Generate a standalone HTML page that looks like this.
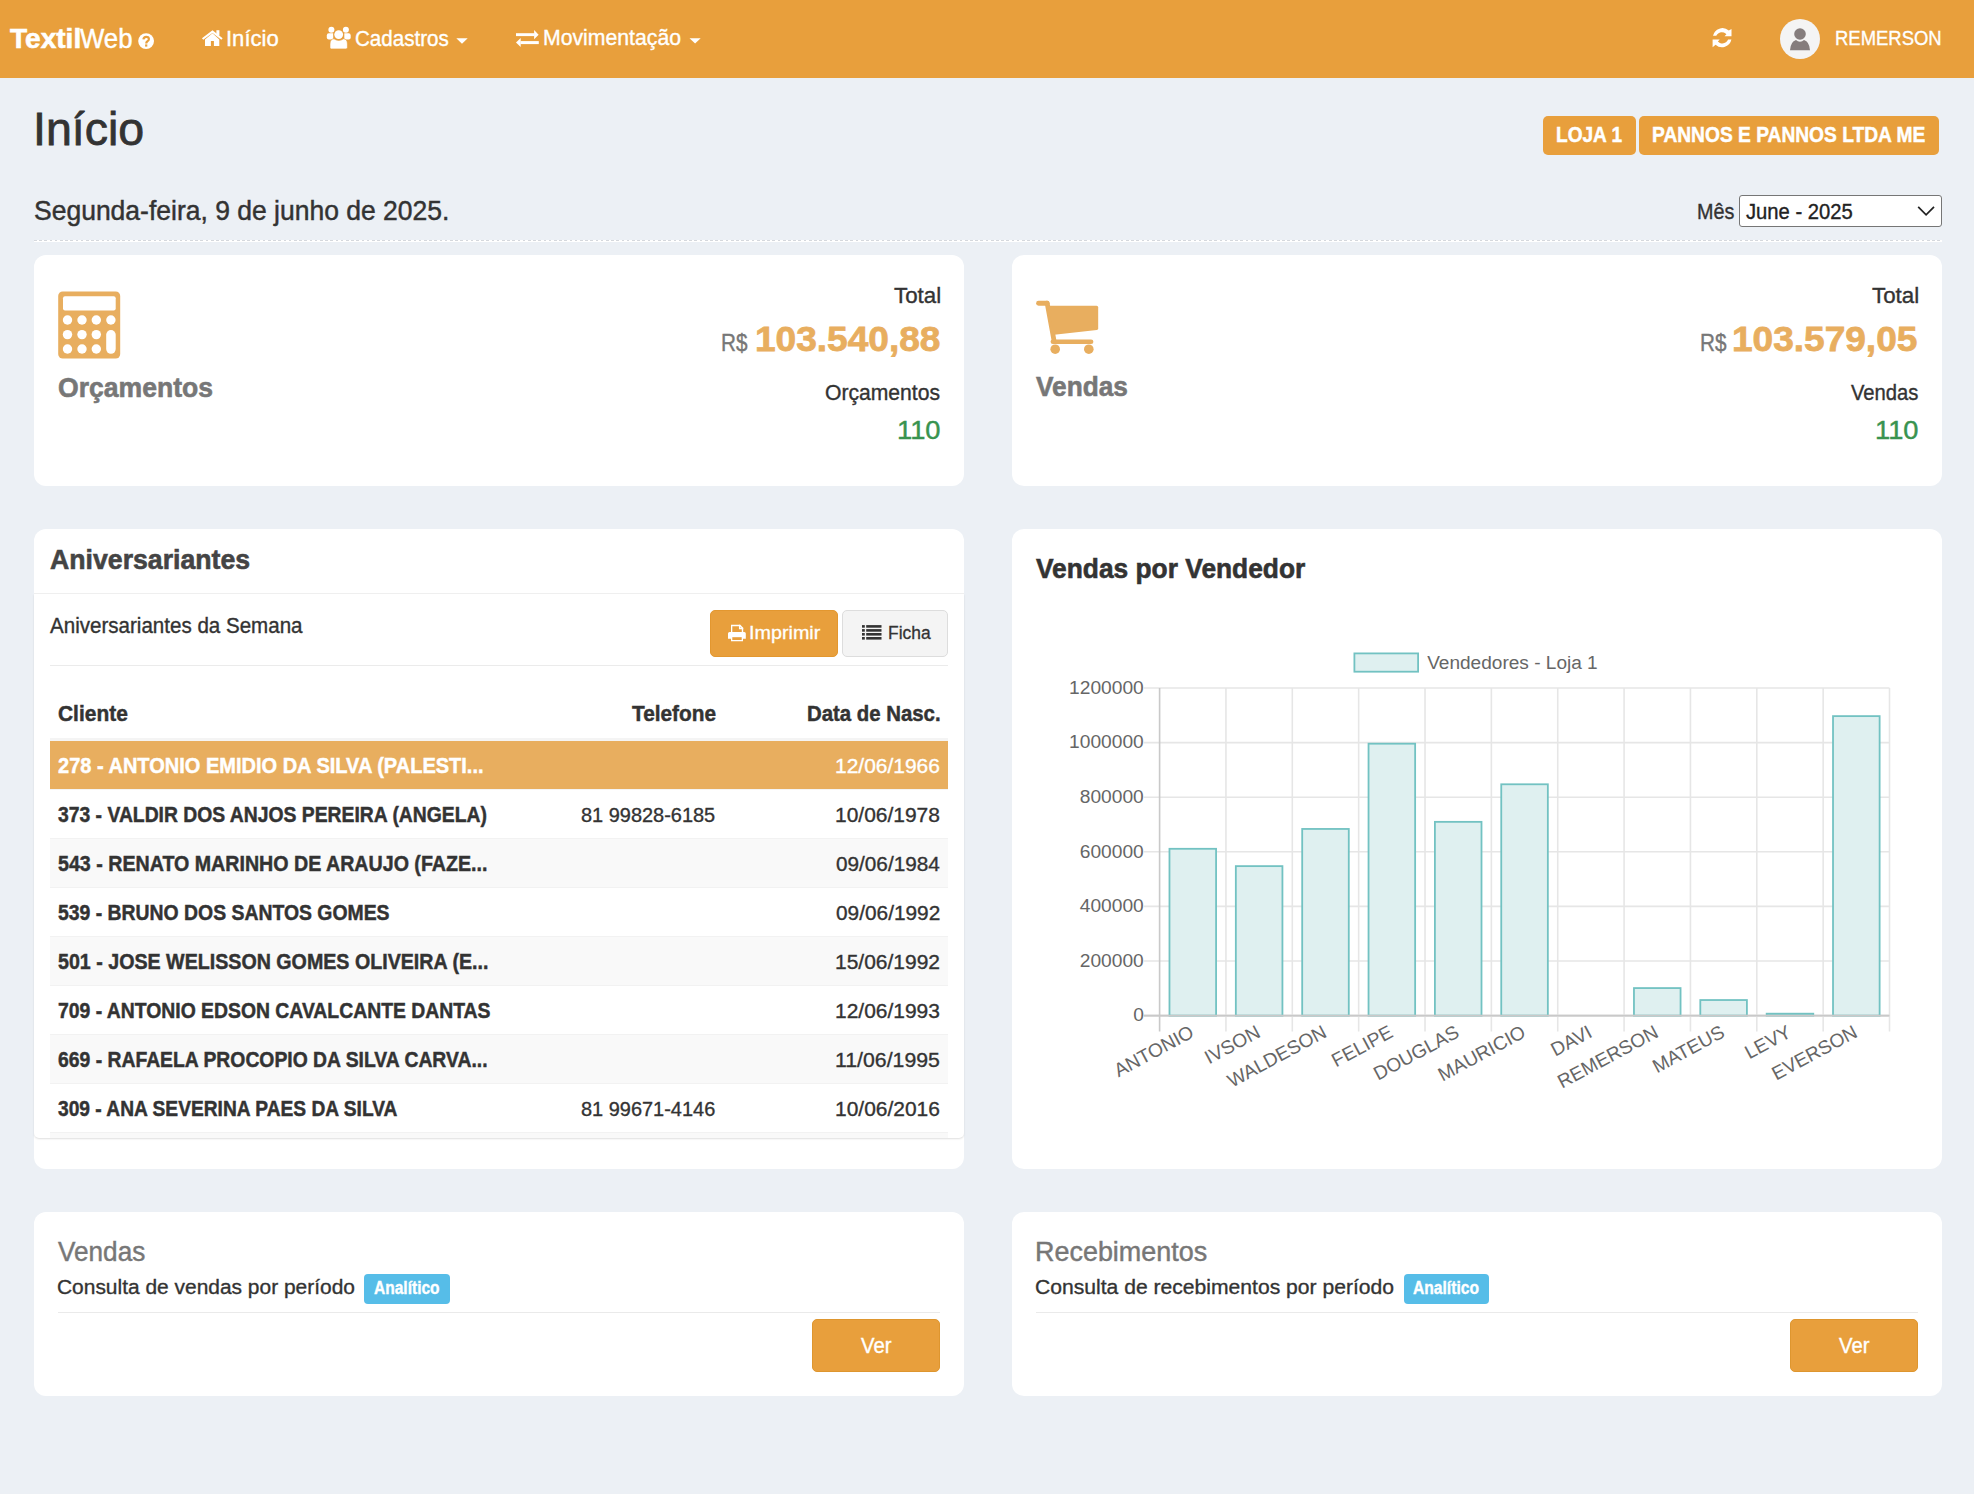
<!DOCTYPE html>
<html><head><meta charset="utf-8">
<style>
html,body{margin:0;padding:0;}
body{width:1974px;height:1494px;overflow:hidden;background:#ECF0F5;position:relative;font-family:"Liberation Sans",sans-serif;}
.a{position:absolute;}
.t{position:absolute;white-space:pre;transform-origin:0 0;font-family:"Liberation Sans",sans-serif;}
.card{position:absolute;background:#fff;border-radius:12px;}
svg{position:absolute;overflow:visible;}
</style></head><body>
<!-- NAVBAR -->
<div class="a" style="left:0;top:0;width:1974px;height:78px;background:#E89F3C;"></div>
<svg style="left:0;top:0" width="1974" height="78" viewBox="0 0 1974 78">
  <!-- question circle -->
  <circle cx="146.1" cy="41.1" r="7.9" fill="#fff"/>
  <path d="M143.4 39.4 q0.3 -2.6 2.8 -2.6 q2.7 0 2.7 2.3 q0 1.4 -1.4 2.1 q-1.2 0.7 -1.2 1.9 v0.3" fill="none" stroke="#E89F3C" stroke-width="2.2" stroke-linecap="butt"/>
  <rect x="145.1" y="44.4" width="2.2" height="2.2" fill="#E89F3C"/>
  <!-- home -->
  <path d="M202.6 39.0 L212.5 31.6 L222.0 39.0" fill="none" stroke="#fff" stroke-width="2.1" stroke-linecap="butt" stroke-linejoin="miter"/>
  <rect x="216.4" y="30.2" width="3.0" height="5.3" fill="#fff"/>
  <path d="M205 39.6 L212.5 33.3 L219.3 39.6 V45.9 H213.9 V40.9 H210.9 V45.9 H205 Z" fill="#fff"/>
  <!-- users -->
  <circle cx="331.4" cy="29.8" r="3.0" fill="#fff"/>
  <circle cx="345.9" cy="29.8" r="3.0" fill="#fff"/>
  <path d="M326.8 35.5 q0 -2.3 2 -2.3 h4.4 v6.3 h-4.4 q-2 0 -2 -2 z" fill="#fff"/>
  <path d="M350.7 35.5 q0 -2.3 -2 -2.3 h-4.4 v6.3 h4.4 q2 0 2 -2 z" fill="#fff"/>
  <circle cx="338.7" cy="34.6" r="5.0" fill="#E89F3C"/>
  <circle cx="338.7" cy="34.6" r="4.4" fill="#fff"/>
  <path d="M330 44 q0 -5 4 -5.2 q2 1.6 4.7 1.6 q2.7 0 4.7 -1.6 q4 0.2 4 5.2 v3.5 q0 1.4 -1.4 1.4 h-14.6 q-1.4 0 -1.4 -1.4 z" fill="#fff" stroke="#E89F3C" stroke-width="0.6"/>
  <!-- caret -->
  <path d="M456.3 38.2 h11.4 l-5.7 5.6 z" fill="#fff"/>
  <!-- exchange -->
  <rect x="516" y="33.2" width="18.5" height="2.9" fill="#fff"/>
  <path d="M534.1 30 L538.6 34.65 L534.1 39.2 Z" fill="#fff"/>
  <rect x="520.5" y="41.1" width="18.3" height="3" fill="#fff"/>
  <path d="M520.7 38.1 L516 42.6 L520.7 47.1 Z" fill="#fff"/>
  <path d="M689.5 38.2 h11.2 l-5.6 5.4 z" fill="#fff"/>
  <!-- refresh -->
  <path d="M1713 35.8 A9.6 9.6 0 0 1 1728.8 30.6 L1731.5 29 V36.2 H1724.5 L1726.4 34.2 A6.2 6.2 0 0 0 1716.3 35.8 Z" fill="#fff"/>
  <path d="M1731.4 39.6 A9.6 9.6 0 0 1 1715.6 44.8 L1712.6 47.2 V39.6 H1719.7 L1717.9 41.6 A6.2 6.2 0 0 0 1728.1 39.6 Z" fill="#fff"/>
  <!-- avatar -->
  <circle cx="1800" cy="39" r="20" fill="#F4F4F4"/>
  <circle cx="1800" cy="34" r="5.8" fill="#857D7D"/>
  <path d="M1790 50.3 q0.6 -8.6 6 -10.2 q1.8 1.6 4 1.6 q2.2 0 4 -1.6 q5.4 1.6 6 10.2 z" fill="#857D7D"/>
</svg>
<!-- HEADER badges -->
<div class="a" style="left:1543px;top:116px;width:93px;height:39px;background:#E89F3C;border-radius:5px;"></div>
<div class="a" style="left:1639px;top:116px;width:300px;height:39px;background:#E89F3C;border-radius:5px;"></div>
<!-- select -->
<div class="a" style="left:1739px;top:195px;width:201px;height:30px;background:#fff;border:1px solid #767676;border-radius:3px;"></div>
<svg style="left:0;top:0" width="1974" height="260" viewBox="0 0 1974 260">
  <path d="M1918.2 206.8 L1926.1 214.8 L1934 206.8" fill="none" stroke="#222" stroke-width="1.7"/>
</svg>
<!-- dashed line -->
<div class="a" style="left:34px;top:240px;width:1908px;height:1px;background:repeating-linear-gradient(90deg,#D5D8DD 0 2.7px,#fff 2.7px 5.2px);"></div><div class="a" style="left:34px;top:241px;width:1908px;height:1px;background:#fff;"></div>

<!-- ROW 1 cards -->
<div class="card" style="left:34px;top:255px;width:930px;height:231px;"></div>
<div class="card" style="left:1012px;top:255px;width:930px;height:231px;"></div>
<svg style="left:0;top:0" width="1974" height="500" viewBox="0 0 1974 500">
  <!-- calculator -->
  <rect x="58.2" y="291.5" width="62" height="67" rx="4.5" fill="#E8AE5F"/>
  <rect x="63" y="296.2" width="52.7" height="14.3" rx="2" fill="#fff"/>
  <g fill="#fff">
    <circle cx="67.5" cy="320" r="4.7"/><circle cx="82" cy="320" r="4.7"/><circle cx="96.3" cy="320" r="4.7"/><circle cx="110.9" cy="320" r="4.7"/>
    <circle cx="67.5" cy="334.6" r="4.7"/><circle cx="82" cy="334.6" r="4.7"/><circle cx="96.3" cy="334.6" r="4.7"/>
    <circle cx="67.5" cy="349" r="4.7"/><circle cx="82" cy="349" r="4.7"/><circle cx="96.3" cy="349" r="4.7"/>
    <rect x="106.2" y="330" width="9.5" height="23.8" rx="4.75"/>
  </g>
  <!-- cart -->
  <g fill="#E8AE5F">
    <rect x="1036.1" y="300.8" width="13.5" height="4.9" rx="2.45"/>
    <path d="M1047.2 303.2 L1054.2 341.6" fill="none" stroke="#E8AE5F" stroke-width="4.8" stroke-linecap="round"/>
    <path d="M1047.8 305.8 L1096.6 305.8 Q1098.2 305.8 1098.2 307.4 V328.6 Q1098.2 329.8 1096.8 330 L1054.2 334.8 Z"/>
    <rect x="1050.6" y="339.4" width="42.8" height="4.6" rx="2.3"/>
    <circle cx="1055.2" cy="349.2" r="4.8"/>
    <circle cx="1088.8" cy="349.2" r="4.8"/>
  </g>
</svg>

<!-- ROW 2 cards -->
<div class="card" style="left:34px;top:529px;width:930px;height:640px;"></div>
<div class="card" style="left:1012px;top:529px;width:930px;height:640px;"></div>
<!-- aniversariantes inner -->
<div class="a" style="left:34px;top:593px;width:930px;height:1px;background:#F0F0F0;"></div>
<div class="a" style="left:34px;top:594px;width:930px;height:544px;background:#fff;border-radius:0 0 5px 5px;box-shadow:0 1px 2px rgba(0,0,0,0.13);overflow:hidden;">
  <div class="a" style="left:16px;top:71px;width:898px;height:1px;background:#EBEBEB;"></div>
  <div class="a" style="left:16px;top:144px;width:898px;height:3px;background:#F4F4F4;"></div>
  <div class="a" style="left:16px;top:147px;width:898px;height:48px;background:#E8AE5F;"></div>
  <div class="a" style="left:16px;top:195px;width:898px;height:1px;background:#F4F4F4;"></div>
  <div class="a" style="left:16px;top:244px;width:898px;height:49px;background:#F9F9F9;border-top:1px solid #F2F2F2;box-sizing:border-box;"></div>
  <div class="a" style="left:16px;top:293px;width:898px;height:1px;background:#F2F2F2;"></div>
  <div class="a" style="left:16px;top:342px;width:898px;height:49px;background:#F9F9F9;border-top:1px solid #F2F2F2;box-sizing:border-box;"></div>
  <div class="a" style="left:16px;top:391px;width:898px;height:1px;background:#F2F2F2;"></div>
  <div class="a" style="left:16px;top:440px;width:898px;height:49px;background:#F9F9F9;border-top:1px solid #F2F2F2;box-sizing:border-box;"></div>
  <div class="a" style="left:16px;top:489px;width:898px;height:1px;background:#F2F2F2;"></div>
  <div class="a" style="left:16px;top:538px;width:898px;height:49px;background:#F9F9F9;border-top:1px solid #F2F2F2;box-sizing:border-box;"></div>
</div>
<!-- buttons -->
<div class="a" style="left:710px;top:610px;width:126px;height:45px;background:#E89F3C;border:1px solid #E3972F;border-radius:5px;"></div>
<div class="a" style="left:842px;top:610px;width:104px;height:45px;background:#F4F4F4;border:1px solid #DDDDDD;border-radius:5px;"></div>
<svg style="left:0;top:0" width="1974" height="700" viewBox="0 0 1974 700">
  <!-- print icon -->
  <g fill="#fff">
    <path d="M731 624.8 H740.3 L743.2 627.7 V633 H741.8 V628.5 L739.6 626.2 H732.3 V633 H731 Z"/>
    <path d="M739.6 624.8 V628.5 H743.2" fill="none" stroke="#fff" stroke-width="1.3"/>
    <path d="M729.6 632.1 H744.3 Q745.8 632.1 745.8 633.6 V638.7 H743 V641.3 H731 V638.7 H728 V633.6 Q728 632.1 729.6 632.1 Z"/>
  </g>
  <rect x="732.3" y="637.2" width="9.4" height="2.8" fill="#E89F3C"/>
  <!-- list icon -->
  <g fill="#333">
    <rect x="862" y="625.1" width="2.8" height="2.6"/><rect x="866.2" y="625.1" width="15.3" height="2.6"/>
    <rect x="862" y="629.1" width="2.8" height="2.6"/><rect x="866.2" y="629.1" width="15.3" height="2.6"/>
    <rect x="862" y="633" width="2.8" height="2.6"/><rect x="866.2" y="633" width="15.3" height="2.6"/>
    <rect x="862" y="637" width="2.8" height="2.6"/><rect x="866.2" y="637" width="15.3" height="2.6"/>
  </g>
</svg>

<!-- CHART -->
<svg style="left:0;top:0" width="1974" height="1494" viewBox="0 0 1974 1494">
<line x1="1143.8" y1="688.00" x2="1889.5" y2="688.00" stroke="#E6E6E6" stroke-width="1.6"/>
<line x1="1143.8" y1="742.60" x2="1889.5" y2="742.60" stroke="#E6E6E6" stroke-width="1.6"/>
<line x1="1143.8" y1="797.20" x2="1889.5" y2="797.20" stroke="#E6E6E6" stroke-width="1.6"/>
<line x1="1143.8" y1="851.80" x2="1889.5" y2="851.80" stroke="#E6E6E6" stroke-width="1.6"/>
<line x1="1143.8" y1="906.40" x2="1889.5" y2="906.40" stroke="#E6E6E6" stroke-width="1.6"/>
<line x1="1143.8" y1="961.00" x2="1889.5" y2="961.00" stroke="#E6E6E6" stroke-width="1.6"/>
<line x1="1143.8" y1="1015.60" x2="1889.5" y2="1015.60" stroke="#C9C9C9" stroke-width="1.6"/>
<line x1="1159.60" y1="688.00" x2="1159.60" y2="1031.5" stroke="#C9C9C9" stroke-width="1.6"/>
<line x1="1225.95" y1="688.00" x2="1225.95" y2="1031.5" stroke="#E6E6E6" stroke-width="1.6"/>
<line x1="1292.31" y1="688.00" x2="1292.31" y2="1031.5" stroke="#E6E6E6" stroke-width="1.6"/>
<line x1="1358.66" y1="688.00" x2="1358.66" y2="1031.5" stroke="#E6E6E6" stroke-width="1.6"/>
<line x1="1425.02" y1="688.00" x2="1425.02" y2="1031.5" stroke="#E6E6E6" stroke-width="1.6"/>
<line x1="1491.37" y1="688.00" x2="1491.37" y2="1031.5" stroke="#E6E6E6" stroke-width="1.6"/>
<line x1="1557.73" y1="688.00" x2="1557.73" y2="1031.5" stroke="#E6E6E6" stroke-width="1.6"/>
<line x1="1624.08" y1="688.00" x2="1624.08" y2="1031.5" stroke="#E6E6E6" stroke-width="1.6"/>
<line x1="1690.44" y1="688.00" x2="1690.44" y2="1031.5" stroke="#E6E6E6" stroke-width="1.6"/>
<line x1="1756.79" y1="688.00" x2="1756.79" y2="1031.5" stroke="#E6E6E6" stroke-width="1.6"/>
<line x1="1823.15" y1="688.00" x2="1823.15" y2="1031.5" stroke="#E6E6E6" stroke-width="1.6"/>
<line x1="1889.50" y1="688.00" x2="1889.50" y2="1031.5" stroke="#E6E6E6" stroke-width="1.6"/>
<text x="1143.8" y="693.70" text-anchor="end" font-family="Liberation Sans" font-size="19.2" fill="#666">1200000</text>
<text x="1143.8" y="748.30" text-anchor="end" font-family="Liberation Sans" font-size="19.2" fill="#666">1000000</text>
<text x="1143.8" y="802.90" text-anchor="end" font-family="Liberation Sans" font-size="19.2" fill="#666">800000</text>
<text x="1143.8" y="857.50" text-anchor="end" font-family="Liberation Sans" font-size="19.2" fill="#666">600000</text>
<text x="1143.8" y="912.10" text-anchor="end" font-family="Liberation Sans" font-size="19.2" fill="#666">400000</text>
<text x="1143.8" y="966.70" text-anchor="end" font-family="Liberation Sans" font-size="19.2" fill="#666">200000</text>
<text x="1143.8" y="1021.30" text-anchor="end" font-family="Liberation Sans" font-size="19.2" fill="#666">0</text>
<rect x="1169.48" y="848.80" width="46.60" height="166.80" fill="#DFF0F0" stroke="#72C2C2" stroke-width="1.8"/>
<rect x="1235.83" y="866.13" width="46.60" height="149.47" fill="#DFF0F0" stroke="#72C2C2" stroke-width="1.8"/>
<rect x="1302.19" y="828.95" width="46.60" height="186.65" fill="#DFF0F0" stroke="#72C2C2" stroke-width="1.8"/>
<rect x="1368.54" y="743.69" width="46.60" height="271.91" fill="#DFF0F0" stroke="#72C2C2" stroke-width="1.8"/>
<rect x="1434.90" y="821.85" width="46.60" height="193.75" fill="#DFF0F0" stroke="#72C2C2" stroke-width="1.8"/>
<rect x="1501.25" y="784.29" width="46.60" height="231.31" fill="#DFF0F0" stroke="#72C2C2" stroke-width="1.8"/>
<rect x="1567.60" y="1015.60" width="46.60" height="0.00" fill="#DFF0F0" stroke="#72C2C2" stroke-width="1.8"/>
<rect x="1633.96" y="988.08" width="46.60" height="27.52" fill="#DFF0F0" stroke="#72C2C2" stroke-width="1.8"/>
<rect x="1700.31" y="1000.04" width="46.60" height="15.56" fill="#DFF0F0" stroke="#72C2C2" stroke-width="1.8"/>
<rect x="1766.67" y="1013.69" width="46.60" height="1.91" fill="#DFF0F0" stroke="#72C2C2" stroke-width="1.8"/>
<rect x="1833.02" y="716.12" width="46.60" height="299.48" fill="#DFF0F0" stroke="#72C2C2" stroke-width="1.8"/>
<line x1="1143.8" y1="1015.60" x2="1889.5" y2="1015.60" stroke="#C9C9C9" stroke-width="1.6"/>
<text x="1192.78" y="1036.80" transform="rotate(-28.3 1192.78 1031.60)" text-anchor="end" font-family="Liberation Sans" font-size="19.2" fill="#666">ANTONIO</text>
<text x="1259.13" y="1036.80" transform="rotate(-28.3 1259.13 1031.60)" text-anchor="end" font-family="Liberation Sans" font-size="19.2" fill="#666">IVSON</text>
<text x="1325.49" y="1036.80" transform="rotate(-28.3 1325.49 1031.60)" text-anchor="end" font-family="Liberation Sans" font-size="19.2" fill="#666">WALDESON</text>
<text x="1391.84" y="1036.80" transform="rotate(-28.3 1391.84 1031.60)" text-anchor="end" font-family="Liberation Sans" font-size="19.2" fill="#666">FELIPE</text>
<text x="1458.20" y="1036.80" transform="rotate(-28.3 1458.20 1031.60)" text-anchor="end" font-family="Liberation Sans" font-size="19.2" fill="#666">DOUGLAS</text>
<text x="1524.55" y="1036.80" transform="rotate(-28.3 1524.55 1031.60)" text-anchor="end" font-family="Liberation Sans" font-size="19.2" fill="#666">MAURICIO</text>
<text x="1590.90" y="1036.80" transform="rotate(-28.3 1590.90 1031.60)" text-anchor="end" font-family="Liberation Sans" font-size="19.2" fill="#666">DAVI</text>
<text x="1657.26" y="1036.80" transform="rotate(-28.3 1657.26 1031.60)" text-anchor="end" font-family="Liberation Sans" font-size="19.2" fill="#666">REMERSON</text>
<text x="1723.61" y="1036.80" transform="rotate(-28.3 1723.61 1031.60)" text-anchor="end" font-family="Liberation Sans" font-size="19.2" fill="#666">MATEUS</text>
<text x="1789.97" y="1036.80" transform="rotate(-28.3 1789.97 1031.60)" text-anchor="end" font-family="Liberation Sans" font-size="19.2" fill="#666">LEVY</text>
<text x="1856.32" y="1036.80" transform="rotate(-28.3 1856.32 1031.60)" text-anchor="end" font-family="Liberation Sans" font-size="19.2" fill="#666">EVERSON</text>
<rect x="1354.4" y="653.4" width="63.7" height="18.3" fill="#DFF0F0" stroke="#72C2C2" stroke-width="1.8"/>
<text x="1427.2" y="669.1" font-family="Liberation Sans" font-size="19.2" fill="#666" textLength="170.5" lengthAdjust="spacingAndGlyphs">Vendedores - Loja 1</text>
</svg>

<!-- ROW 3 -->
<div class="card" style="left:34px;top:1212px;width:930px;height:184px;"></div>
<div class="card" style="left:1012px;top:1212px;width:930px;height:184px;"></div>
<div class="a" style="left:58px;top:1312px;width:882px;height:1px;background:#EAEAEA;"></div>
<div class="a" style="left:1036px;top:1312px;width:882px;height:1px;background:#EAEAEA;"></div>
<div class="a" style="left:364px;top:1274px;width:86px;height:30px;background:#56BDE8;border-radius:4px;"></div>
<div class="a" style="left:1403.5px;top:1274px;width:85.5px;height:30px;background:#56BDE8;border-radius:4px;"></div>
<div class="a" style="left:812px;top:1319px;width:126px;height:51px;background:#E89F3C;border:1px solid #DE962F;border-radius:5px;"></div>
<div class="a" style="left:1790px;top:1319px;width:126px;height:51px;background:#E89F3C;border:1px solid #DE962F;border-radius:5px;"></div>

<span class='t' style='left:9.78px;top:24.87px;font-size:27.62px;line-height:27.62px;font-weight:700;color:#fff;transform:scaleX(1.0163);-webkit-text-stroke:0.592px #fff;'>Textil</span>
<span class='t' style='left:79.89px;top:24.87px;font-size:27.62px;line-height:27.62px;font-weight:400;color:#fff;transform:scaleX(0.9327);-webkit-text-stroke:0.460px #fff;'>Web</span>
<span class='t' style='left:226.27px;top:28.32px;font-size:21.66px;line-height:21.66px;font-weight:400;color:#fff;transform:scaleX(1.0179);-webkit-text-stroke:0.361px #fff;'>Início</span>
<span class='t' style='left:354.95px;top:28.32px;font-size:21.66px;line-height:21.66px;font-weight:400;color:#fff;transform:scaleX(0.9508);-webkit-text-stroke:0.361px #fff;'>Cadastros</span>
<span class='t' style='left:542.86px;top:28.24px;font-size:21.51px;line-height:21.51px;font-weight:400;color:#fff;transform:scaleX(0.9872);-webkit-text-stroke:0.359px #fff;'>Movimentação</span>
<span class='t' style='left:1835.29px;top:28.43px;font-size:20.93px;line-height:20.93px;font-weight:400;color:#fff;transform:scaleX(0.8818);-webkit-text-stroke:0.349px #fff;'>REMERSON</span>
<span class='t' style='left:33.41px;top:106.15px;font-size:46.66px;line-height:46.66px;font-weight:400;color:#333;transform:scaleX(0.9970);-webkit-text-stroke:0.778px #333;'>Início</span>
<span class='t' style='left:1555.92px;top:123.75px;font-size:22.09px;line-height:22.09px;font-weight:700;color:#fff;transform:scaleX(0.8643);-webkit-text-stroke:0.473px #fff;'>LOJA 1</span>
<span class='t' style='left:1651.72px;top:123.75px;font-size:22.09px;line-height:22.09px;font-weight:700;color:#fff;transform:scaleX(0.8693);-webkit-text-stroke:0.473px #fff;'>PANNOS E PANNOS LTDA ME</span>
<span class='t' style='left:34.00px;top:196.36px;font-size:28.34px;line-height:28.34px;font-weight:400;color:#333;transform:scaleX(0.9353);-webkit-text-stroke:0.472px #333;'>Segunda-feira, 9 de junho de 2025.</span>
<span class='t' style='left:1697.38px;top:200.99px;font-size:21.80px;line-height:21.80px;font-weight:400;color:#333;transform:scaleX(0.9065);-webkit-text-stroke:0.363px #333;'>Mês</span>
<span class='t' style='left:1746.38px;top:201.12px;font-size:21.66px;line-height:21.66px;font-weight:400;color:#222;transform:scaleX(0.9340);-webkit-text-stroke:0.361px #222;'>June - 2025</span>
<span class='t' style='left:58.11px;top:373.65px;font-size:27.76px;line-height:27.76px;font-weight:700;color:#777;transform:scaleX(0.9570);-webkit-text-stroke:0.595px #777;'>Orçamentos</span>
<span class='t' style='left:893.80px;top:284.67px;font-size:21.95px;line-height:21.95px;font-weight:400;color:#333;transform:scaleX(1.0162);-webkit-text-stroke:0.366px #333;'>Total</span>
<span class='t' style='left:721.30px;top:332.12px;font-size:23.55px;line-height:23.55px;font-weight:400;color:#777;transform:scaleX(0.8782);-webkit-text-stroke:0.392px #777;'>R$</span>
<span class='t' style='left:754.67px;top:321.78px;font-size:35.76px;line-height:35.76px;font-weight:700;color:#E8AE5F;transform:scaleX(1.0365);-webkit-text-stroke:0.766px #E8AE5F;'>103.540,88</span>
<span class='t' style='left:825.20px;top:381.63px;font-size:22.24px;line-height:22.24px;font-weight:400;color:#333;transform:scaleX(0.9500);-webkit-text-stroke:0.371px #333;'>Orçamentos</span>
<span class='t' style='left:896.52px;top:416.81px;font-size:26.27px;line-height:26.27px;font-weight:400;color:#38934F;transform:scaleX(1.0400);-webkit-text-stroke:0.438px #38934F;'>110</span>
<span class='t' style='left:1035.72px;top:373.30px;font-size:28.05px;line-height:28.05px;font-weight:700;color:#777;transform:scaleX(0.9352);-webkit-text-stroke:0.601px #777;'>Vendas</span>
<span class='t' style='left:1871.80px;top:284.67px;font-size:21.95px;line-height:21.95px;font-weight:400;color:#333;transform:scaleX(1.0162);-webkit-text-stroke:0.366px #333;'>Total</span>
<span class='t' style='left:1699.80px;top:332.12px;font-size:23.55px;line-height:23.55px;font-weight:400;color:#777;transform:scaleX(0.8782);-webkit-text-stroke:0.392px #777;'>R$</span>
<span class='t' style='left:1732.27px;top:321.78px;font-size:35.76px;line-height:35.76px;font-weight:700;color:#E8AE5F;transform:scaleX(1.0359);-webkit-text-stroke:0.766px #E8AE5F;'>103.579,05</span>
<span class='t' style='left:1850.51px;top:381.63px;font-size:22.24px;line-height:22.24px;font-weight:400;color:#333;transform:scaleX(0.9093);-webkit-text-stroke:0.371px #333;'>Vendas</span>
<span class='t' style='left:1874.62px;top:416.81px;font-size:26.27px;line-height:26.27px;font-weight:400;color:#38934F;transform:scaleX(1.0374);-webkit-text-stroke:0.438px #38934F;'>110</span>
<span class='t' style='left:49.54px;top:545.83px;font-size:27.91px;line-height:27.91px;font-weight:700;color:#444;transform:scaleX(0.9559);-webkit-text-stroke:0.598px #444;'>Aniversariantes</span>
<span class='t' style='left:50.16px;top:616.04px;font-size:21.51px;line-height:21.51px;font-weight:400;color:#333;transform:scaleX(0.9561);-webkit-text-stroke:0.359px #333;'>Aniversariantes da Semana</span>
<span class='t' style='left:748.78px;top:624.16px;font-size:18.90px;line-height:18.90px;font-weight:400;color:#fff;transform:scaleX(1.0454);-webkit-text-stroke:0.315px #fff;'>Imprimir</span>
<span class='t' style='left:887.97px;top:624.16px;font-size:18.90px;line-height:18.90px;font-weight:400;color:#333;transform:scaleX(0.9214);-webkit-text-stroke:0.315px #333;'>Ficha</span>
<span class='t' style='left:57.94px;top:703.40px;font-size:22.38px;line-height:22.38px;font-weight:700;color:#333;transform:scaleX(0.9352);-webkit-text-stroke:0.480px #333;'>Cliente</span>
<span class='t' style='left:631.77px;top:703.40px;font-size:22.38px;line-height:22.38px;font-weight:700;color:#333;transform:scaleX(0.9292);-webkit-text-stroke:0.480px #333;'>Telefone</span>
<span class='t' style='left:806.84px;top:703.40px;font-size:22.38px;line-height:22.38px;font-weight:700;color:#333;transform:scaleX(0.9102);-webkit-text-stroke:0.480px #333;'>Data de Nasc.</span>
<span class='t' style='left:57.81px;top:755.29px;font-size:21.22px;line-height:21.22px;font-weight:700;color:#fff;transform:scaleX(0.9433);-webkit-text-stroke:0.455px #fff;'>278 - ANTONIO EMIDIO DA SILVA (PALESTI...</span>
<span class='t' style='left:835.00px;top:755.91px;font-size:20.48px;line-height:20.48px;font-weight:400;color:#fff;transform:scaleX(1.0241);-webkit-text-stroke:0.341px #fff;'>12/06/1966</span>
<span class='t' style='left:58.06px;top:804.29px;font-size:21.22px;line-height:21.22px;font-weight:700;color:#333;transform:scaleX(0.9110);-webkit-text-stroke:0.455px #333;'>373 - VALDIR DOS ANJOS PEREIRA (ANGELA)</span>
<span class='t' style='left:581.03px;top:804.91px;font-size:20.48px;line-height:20.48px;font-weight:400;color:#333;transform:scaleX(0.9744);-webkit-text-stroke:0.341px #333;'>81 99828-6185</span>
<span class='t' style='left:835.00px;top:804.91px;font-size:20.48px;line-height:20.48px;font-weight:400;color:#333;transform:scaleX(1.0240);-webkit-text-stroke:0.341px #333;'>10/06/1978</span>
<span class='t' style='left:57.90px;top:853.29px;font-size:21.22px;line-height:21.22px;font-weight:700;color:#333;transform:scaleX(0.9253);-webkit-text-stroke:0.455px #333;'>543 - RENATO MARINHO DE ARAUJO (FAZE...</span>
<span class='t' style='left:835.79px;top:853.91px;font-size:20.48px;line-height:20.48px;font-weight:400;color:#333;transform:scaleX(1.0133);-webkit-text-stroke:0.341px #333;'>09/06/1984</span>
<span class='t' style='left:57.90px;top:902.29px;font-size:21.22px;line-height:21.22px;font-weight:700;color:#333;transform:scaleX(0.9140);-webkit-text-stroke:0.455px #333;'>539 - BRUNO DOS SANTOS GOMES</span>
<span class='t' style='left:835.79px;top:902.91px;font-size:20.48px;line-height:20.48px;font-weight:400;color:#333;transform:scaleX(1.0177);-webkit-text-stroke:0.341px #333;'>09/06/1992</span>
<span class='t' style='left:57.90px;top:951.29px;font-size:21.22px;line-height:21.22px;font-weight:700;color:#333;transform:scaleX(0.9258);-webkit-text-stroke:0.455px #333;'>501 - JOSE WELISSON GOMES OLIVEIRA (E...</span>
<span class='t' style='left:835.00px;top:951.91px;font-size:20.48px;line-height:20.48px;font-weight:400;color:#333;transform:scaleX(1.0254);-webkit-text-stroke:0.341px #333;'>15/06/1992</span>
<span class='t' style='left:57.67px;top:1000.29px;font-size:21.22px;line-height:21.22px;font-weight:700;color:#333;transform:scaleX(0.9126);-webkit-text-stroke:0.455px #333;'>709 - ANTONIO EDSON CAVALCANTE DANTAS</span>
<span class='t' style='left:835.00px;top:1000.91px;font-size:20.48px;line-height:20.48px;font-weight:400;color:#333;transform:scaleX(1.0241);-webkit-text-stroke:0.341px #333;'>12/06/1993</span>
<span class='t' style='left:57.79px;top:1049.29px;font-size:21.22px;line-height:21.22px;font-weight:700;color:#333;transform:scaleX(0.9116);-webkit-text-stroke:0.455px #333;'>669 - RAFAELA PROCOPIO DA SILVA CARVA...</span>
<span class='t' style='left:834.98px;top:1049.91px;font-size:20.48px;line-height:20.48px;font-weight:400;color:#333;transform:scaleX(1.0394);-webkit-text-stroke:0.341px #333;'>11/06/1995</span>
<span class='t' style='left:58.06px;top:1098.29px;font-size:21.22px;line-height:21.22px;font-weight:700;color:#333;transform:scaleX(0.9044);-webkit-text-stroke:0.455px #333;'>309 - ANA SEVERINA PAES DA SILVA</span>
<span class='t' style='left:581.03px;top:1098.91px;font-size:20.48px;line-height:20.48px;font-weight:400;color:#333;transform:scaleX(0.9747);-webkit-text-stroke:0.341px #333;'>81 99671-4146</span>
<span class='t' style='left:835.00px;top:1098.91px;font-size:20.48px;line-height:20.48px;font-weight:400;color:#333;transform:scaleX(1.0241);-webkit-text-stroke:0.341px #333;'>10/06/2016</span>
<span class='t' style='left:1035.82px;top:554.70px;font-size:27.47px;line-height:27.47px;font-weight:700;color:#333;transform:scaleX(0.9587);-webkit-text-stroke:0.589px #333;'>Vendas por Vendedor</span>
<span class='t' style='left:57.79px;top:1238.04px;font-size:27.18px;line-height:27.18px;font-weight:400;color:#777;transform:scaleX(0.9624);-webkit-text-stroke:0.453px #777;'>Vendas</span>
<span class='t' style='left:57.44px;top:1276.21px;font-size:21.08px;line-height:21.08px;font-weight:400;color:#333;transform:scaleX(0.9932);-webkit-text-stroke:0.351px #333;'>Consulta de vendas por período</span>
<span class='t' style='left:374.01px;top:1279.69px;font-size:17.44px;line-height:17.44px;font-weight:700;color:#fff;transform:scaleX(0.8907);-webkit-text-stroke:0.374px #fff;'>Analítico</span>
<span class='t' style='left:860.91px;top:1336.16px;font-size:21.37px;line-height:21.37px;font-weight:400;color:#fff;transform:scaleX(0.9489);-webkit-text-stroke:0.356px #fff;'>Ver</span>
<span class='t' style='left:1034.79px;top:1238.04px;font-size:27.18px;line-height:27.18px;font-weight:400;color:#777;transform:scaleX(0.9913);-webkit-text-stroke:0.453px #777;'>Recebimentos</span>
<span class='t' style='left:1035.43px;top:1276.21px;font-size:21.08px;line-height:21.08px;font-weight:400;color:#333;transform:scaleX(1.0013);-webkit-text-stroke:0.351px #333;'>Consulta de recebimentos por período</span>
<span class='t' style='left:1413.01px;top:1279.69px;font-size:17.44px;line-height:17.44px;font-weight:700;color:#fff;transform:scaleX(0.8962);-webkit-text-stroke:0.374px #fff;'>Analítico</span>
<span class='t' style='left:1838.91px;top:1336.16px;font-size:21.37px;line-height:21.37px;font-weight:400;color:#fff;transform:scaleX(0.9489);-webkit-text-stroke:0.356px #fff;'>Ver</span>
</body></html>
